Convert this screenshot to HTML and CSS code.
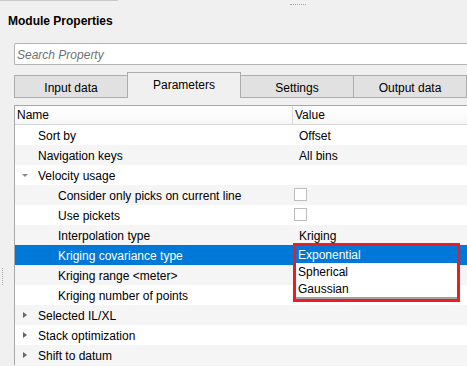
FILE: index.html
```html
<!DOCTYPE html>
<html lang="en">

<head>
  <meta charset="UTF-8">
  <title>Module Properties</title>
  <link rel="stylesheet" href="styles.css">
</head>

<body>
  <div class="topbar">
    <div class="edge"></div>
    <div class="grip"></div>
  </div>
  <div class="side-grip"></div>

  <h1 class="title">Module Properties</h1>

  <div class="search">Search Property</div>

  <div class="tabs">
    <div class="tab">Input data</div>
    <div class="tab active">Parameters</div>
    <div class="tab">Settings</div>
    <div class="tab">Output data</div>
  </div>

  <div class="tree">
    <div class="header">
      <div class="col-name">Name</div>
      <div class="col-value">Value</div>
    </div>

    <div class="row">
      <div class="name">Sort by</div>
      <div class="value">Offset</div>
    </div>
    <div class="row alt">
      <div class="name">Navigation keys</div>
      <div class="value">All bins</div>
    </div>
    <div class="row">
      <div class="name"><span class="arrow down"></span>Velocity usage</div>
      <div class="value"></div>
    </div>
    <div class="row alt">
      <div class="name child">Consider only picks on current line</div>
      <div class="value"><span class="check"></span></div>
    </div>
    <div class="row">
      <div class="name child">Use pickets</div>
      <div class="value"><span class="check"></span></div>
    </div>
    <div class="row alt">
      <div class="name child">Interpolation type</div>
      <div class="value">Kriging</div>
    </div>
    <div class="row selected">
      <div class="name child">Kriging covariance type</div>
      <div class="value"></div>
    </div>
    <div class="row alt">
      <div class="name child">Kriging range &lt;meter&gt;</div>
      <div class="value"></div>
    </div>
    <div class="row">
      <div class="name child">Kriging number of points</div>
      <div class="value"></div>
    </div>
    <div class="row alt">
      <div class="name"><span class="arrow right"></span>Selected IL/XL</div>
      <div class="value"></div>
    </div>
    <div class="row">
      <div class="name"><span class="arrow right"></span>Stack optimization</div>
      <div class="value"></div>
    </div>
    <div class="row alt">
      <div class="name"><span class="arrow right"></span>Shift to datum</div>
      <div class="value"></div>
    </div>

    <!-- open combo list, outlined in red -->
    <div class="popup">
      <div class="option current">Exponential</div>
      <div class="option">Spherical</div>
      <div class="option">Gaussian</div>
      <div class="popup-bar"></div>
    </div>
  </div>
</body>

</html>
```

FILE: styles.css
```css
body {
  margin: 0;
  width: 467px;
  height: 366px;
  overflow: hidden;
  background: #f0f0f0;
  font-family: "Liberation Sans", Arial, sans-serif;
  font-size: 12px;
  color: #000;
  position: relative;
}

.topbar {
  display: flex;
  height: 8px;
}

.edge {
  width: 118px;
  height: 1px;
  background: #c8c8c8;
  border-radius: 0 0 1px 0;
}

.grip {
  width: 16px;
  margin-left: 172px;
  margin-top: 4px;
  height: 0;
  border-top: 1px dotted #a0a0a0;
}

.side-grip {
  position: absolute;
  left: 2px;
  top: 268px;
  height: 17px;
  border-left: 1px dotted #a8a8a8;
}

.title {
  margin: 5px 0 0 8px;
  font-size: 12px;
  line-height: 16px;
  font-weight: bold;
}

.search {
  margin: 14px 0 0 14px;
  height: 19px;
  padding-top: 1px;
  line-height: 20px;
  padding-left: 2px;
  background: #fff;
  border: 1px solid #b4b4b4;
  border-right: none;
  border-radius: 2px 0 0 2px;
  color: #707070;
  font-style: italic;
}

.tabs {
  display: flex;
  align-items: flex-end;
  margin: 7px 0 0 14px;
  height: 25px;
  border-bottom: 1px solid #adadad;
}

.tab {
  width: 112px;
  height: 20px;
  padding-top: 1px;
  line-height: 22px;
  text-align: center;
  background: #e1e1e1;
  border: 1px solid #adadad;
  border-bottom: none;
  margin-right: -1px;
}

.tab.active {
  height: 24px;
  line-height: 23px;
  background: #f0f0f0;
  margin-bottom: -1px;
  position: relative;
}

.tree {
  position: relative;
  margin: 7px 0 0 14px;
  background: #fff;
  border-left: 1px solid #a8a8a8;
  border-top: 1px solid #a8a8a8;
}

.header {
  display: flex;
  height: 18px;
  line-height: 18px;
  background: linear-gradient(#ffffff, #f7f7f7);
  border-bottom: 1px solid #d5d5d5;
}

.col-name {
  width: 275px;
  padding-left: 2px;
  border-right: 1px solid #d8d8d8;
}

.col-value {
  padding-left: 2px;
}

.row {
  display: flex;
  height: 20px;
  background: #fff;
}

.row.alt {
  background: #f5f5f5;
}

.row.selected {
  background: #0078d7;
  color: #fff;
}

.name,
.value {
  height: 19px;
  padding-top: 1px;
  line-height: 20px;
}

.name {
  width: 255px;
  padding-left: 23px;
  position: relative;
}

.name.child {
  width: 235px;
  padding-left: 43px;
}

.value {
  padding-left: 6px;
}

.check {
  display: block;
  width: 11px;
  height: 11px;
  margin: 2px 0 0 -5px;
  background: #fff;
  border: 1px solid #bdbdbd;
}

.arrow {
  position: absolute;
  left: 7px;
  width: 0;
  height: 0;
}

.arrow.down {
  top: 9px;
  border-left: 3px solid transparent;
  border-right: 3px solid transparent;
  border-top: 3px solid #8a8a8a;
}

.arrow.right {
  left: 8px;
  top: 7px;
  border-top: 3.5px solid transparent;
  border-bottom: 3.5px solid transparent;
  border-left: 4px solid #666;
}

.popup {
  position: absolute;
  left: 278px;
  top: 137px;
  width: 161px;
  background: #fff;
  border: 3px solid #ed1c24;
}

.option {
  height: 16px;
  padding-top: 1px;
  line-height: 16px;
  padding-left: 2px;
}

.option.current {
  background: #0078d7;
  color: #fff;
}

.popup-bar {
  height: 2px;
  background: #a0a0a0;
}
```
